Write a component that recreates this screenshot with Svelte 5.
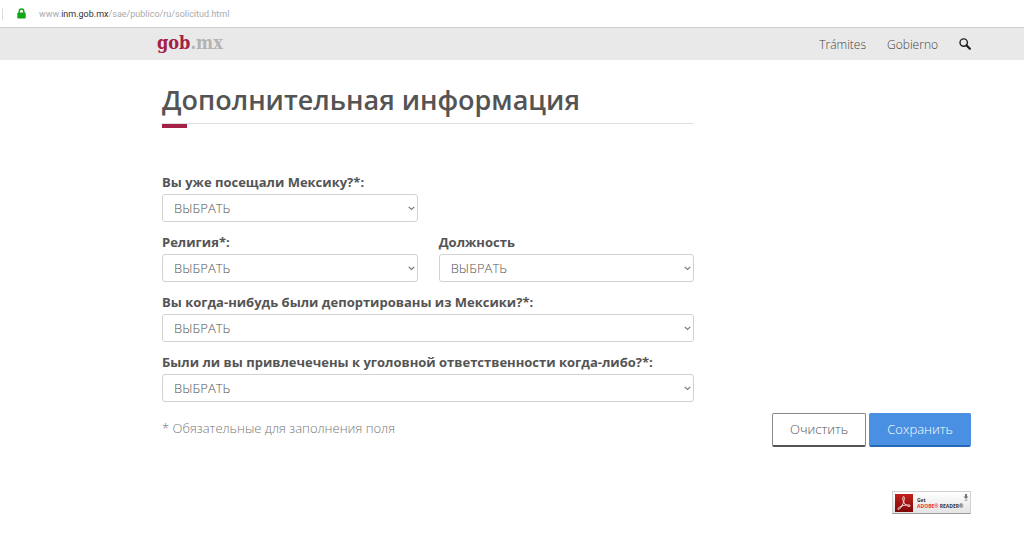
<script lang="ts">
	interface Field {
		id: string;
		label: string;
		wide?: boolean;
		alone?: boolean;
	}

	const fields: Field[] = [
		{ id: 'visited', label: 'Вы уже посещали Мексику?*:', alone: true },
		{ id: 'religion', label: 'Религия*:' },
		{ id: 'position', label: 'Должность' },
		{ id: 'deported', label: 'Вы когда-нибудь были депортированы из Мексики?*:', wide: true },
		{ id: 'criminal', label: 'Были ли вы привлечечены к уголовной ответственности когда-либо?*:', wide: true }
	];
</script>

<div class="address-bar">
	<svg class="lock" viewBox="0 0 9 11" aria-hidden="true">
		<path d="M2.2 5V3.3a2.3 2.3 0 0 1 4.6 0V5" fill="none" stroke="#12a612" stroke-width="1.4" />
		<rect x="0.3" y="4.6" width="8.4" height="6" rx="0.8" fill="#12a612" />
	</svg>
	<span class="url">www.<b>inm.gob.mx</b>/sae/publico/ru/solicitud.html</span>
</div>

<header class="navbar">
	<a class="logo" href="#inicio">gob<span>.mx</span></a>
	<nav>
		<a href="#tramites">Trámites</a>
		<a href="#gobierno">Gobierno</a>
		<a class="search" href="#buscar" aria-label="Buscar">
			<svg viewBox="0 0 12 12">
				<circle cx="4.7" cy="4.6" r="3.7" fill="none" stroke="#222" stroke-width="1.4" />
				<path d="M7.5 7.4 10.9 10.8" stroke="#222" stroke-width="2.2" stroke-linecap="round" />
			</svg>
		</a>
	</nav>
</header>

<main>
	<form onsubmit={(e) => e.preventDefault()}>
		<div class="form-body">
			<h1>Дополнительная информация</h1>
			<div class="fields">
				{#each fields as field (field.id)}
					<div class="field" class:wide={field.wide || field.alone}>
						<label for={field.id}>{field.label}</label>
						<div class="select-wrap" class:half={field.alone}>
							<select id={field.id}>
								<option>ВЫБРАТЬ</option>
							</select>
							<svg class="chevron" viewBox="0 0 7 5" aria-hidden="true">
								<path d="M0.7 0.9 3.5 3.5 6.3 0.9" fill="none" stroke="#777" stroke-width="1.2" />
							</svg>
						</div>
					</div>
				{/each}
			</div>
		</div>
		<div class="form-footer">
			<p>* Обязательные для заполнения поля</p>
			<div class="buttons">
				<button type="reset" class="btn btn-default">Очистить</button>
				<button type="submit" class="btn btn-primary">Сохранить</button>
			</div>
		</div>
	</form>

	<a class="reader" href="#reader">
		<svg viewBox="0 0 18 18" aria-hidden="true">
			<defs>
				<linearGradient id="reader-red" x1="0" y1="0" x2="0" y2="1">
					<stop offset="0" stop-color="#c4201c" />
					<stop offset="1" stop-color="#7d0808" />
				</linearGradient>
			</defs>
			<rect width="18" height="18" fill="url(#reader-red)" />
			<path
				d="M8.4 2.6c1.2-.4 1.1 2.2.5 4.5C8.200 9.800 6 14 4.300 15.200c-1 .7-1.900 0-1.200-.9 1.100-1.500 5.100-3 8.200-3.400 1.900-.2 4 .1 4 1 0 1-2.500.6-4-.6C9.300 9.700 7.700 6.600 7.700 4.300c0-1 .2-1.500.7-1.700z"
				fill="none"
				stroke="#f3dcda"
				stroke-width="1"
			/>
		</svg>
		<span class="reader-text">
			<span>Get</span>
			<span><em>ADOBE®</em> READER®</span>
		</span>
		<svg class="download" viewBox="0 0 6 7" aria-hidden="true">
			<path d="M2 0h2v2.500h1.500L3 5 .5 2.500H2zM1.500 5.700h3v.8h-3z" fill="#777" />
		</svg>
	</a>
</main>

<style>
	:global(body) {
		background: #fff;
		color: #545454;
		font-family: 'Open Sans', sans-serif;
		font-size: 13px;
	}

	a {
		color: inherit;
		text-decoration: none;
	}

	/* Address bar */
	.address-bar {
		display: flex;
		align-items: center;
		height: 27px;
		box-sizing: border-box;
		padding-left: 17px;
		background: linear-gradient(#ddd, #ddd) 2px 8px / 1px 12px no-repeat;
	}

	.lock {
		width: 9px;
		height: 11px;
		margin-right: 13px;
	}

	.url {
		color: #aaa;
		font-family: Roboto, sans-serif;
		font-size: 9px;
	}

	.url b {
		color: #333;
		font-weight: 400;
	}

	/* Navbar */
	.navbar {
		display: flex;
		align-items: center;
		justify-content: space-between;
		height: 33px;
		box-sizing: border-box;
		padding: 0 53px 0 157px;
		border-top: 1px solid #c8ced4;
		background: #e9e9e9;
	}

	.logo {
		color: #a42145;
		font-family: 'DejaVu Serif Condensed', 'DejaVu Serif', serif;
		font-size: 18px;
		font-weight: 700;
		line-height: 28px;
		padding-bottom: 2px;
	}

	.logo span {
		color: #b3b3b3;
	}

	nav {
		display: flex;
		align-items: center;
		gap: 21px;
		color: #444;
		font-size: 12px;
		font-weight: 300;
	}

	.search svg {
		display: block;
		width: 12px;
		height: 12px;
	}

	/* Form */
	main {
		padding: 22px 53px 0 162px;
	}

	.form-body {
		width: calc((100% + 21px) * 2 / 3 - 21px);
	}

	h1 {
		position: relative;
		margin: 0 0 48px;
		padding-bottom: 5px;
		border-bottom: 1px solid #e0e0e0;
		font-size: 27px;
		font-weight: 600;
		line-height: 36px;
		white-space: nowrap;
	}

	/* Short red bar hanging from the heading's rule */
	h1::after {
		content: '';
		position: absolute;
		left: 0;
		bottom: -5px;
		width: 25px;
		height: 4px;
		background: #a42145;
	}

	.fields {
		display: grid;
		grid-template-columns: 1fr 1fr;
		gap: 10px 21px;
	}

	.wide {
		grid-column: 1 / -1;
	}

	label {
		display: block;
		margin-bottom: 2px;
		font-weight: 700;
		line-height: 20px;
	}

	.select-wrap {
		position: relative;
	}

	.half {
		width: calc((100% - 21px) / 2);
	}

	select {
		display: block;
		width: 100%;
		height: 28px;
		padding: 0 20px 0 11px;
		border: 1px solid #d2d2d2;
		border-radius: 3px;
		appearance: none;
		background: #fff;
		color: #545454;
		font: 300 13px 'Open Sans', sans-serif;
	}

	.chevron {
		position: absolute;
		top: 12px;
		right: 3px;
		width: 7px;
		height: 5px;
		pointer-events: none;
	}

	.form-footer {
		display: flex;
		justify-content: space-between;
		margin-top: 11px;
	}

	.form-footer p {
		margin: 5px 0 0;
		color: #777;
		font-weight: 300;
		line-height: 20px;
	}

	.buttons {
		display: flex;
		gap: 3px;
	}

	.btn {
		height: 34px;
		padding: 0 17px 2px;
		border: 1px solid #888;
		border-bottom: 2px solid #545454;
		border-radius: 2px;
		background: #fff;
		color: #545454;
		font: 300 13px 'Open Sans', sans-serif;
		cursor: pointer;
	}

	.btn-primary {
		border-color: #4a90e2;
		border-bottom-color: #2468b8;
		background: #4a90e2;
		color: #fff;
	}

	/* Adobe Reader badge */
	.reader {
		display: flex;
		align-items: center;
		width: 79px;
		height: 23px;
		box-sizing: border-box;
		margin: 44px 0 0 auto;
		padding: 0 3px 0 2px;
		border: 1px solid #d0d0d0;
		border-bottom-color: #999;
		background: linear-gradient(#fff, #e4e4e4);
	}

	.reader svg {
		flex: none;
		width: 18px;
		height: 18px;
	}

	.reader-text {
		display: flex;
		flex-direction: column;
		margin-left: 4px;
		color: #333;
		font: 700 5px/6px 'Open Sans', sans-serif;
		white-space: nowrap;
	}

	.reader em {
		color: #e33;
		font-style: normal;
	}

	.reader .download {
		align-self: flex-start;
		width: 6px;
		height: 7px;
		margin: 2px 0 0 auto;
	}
</style>
